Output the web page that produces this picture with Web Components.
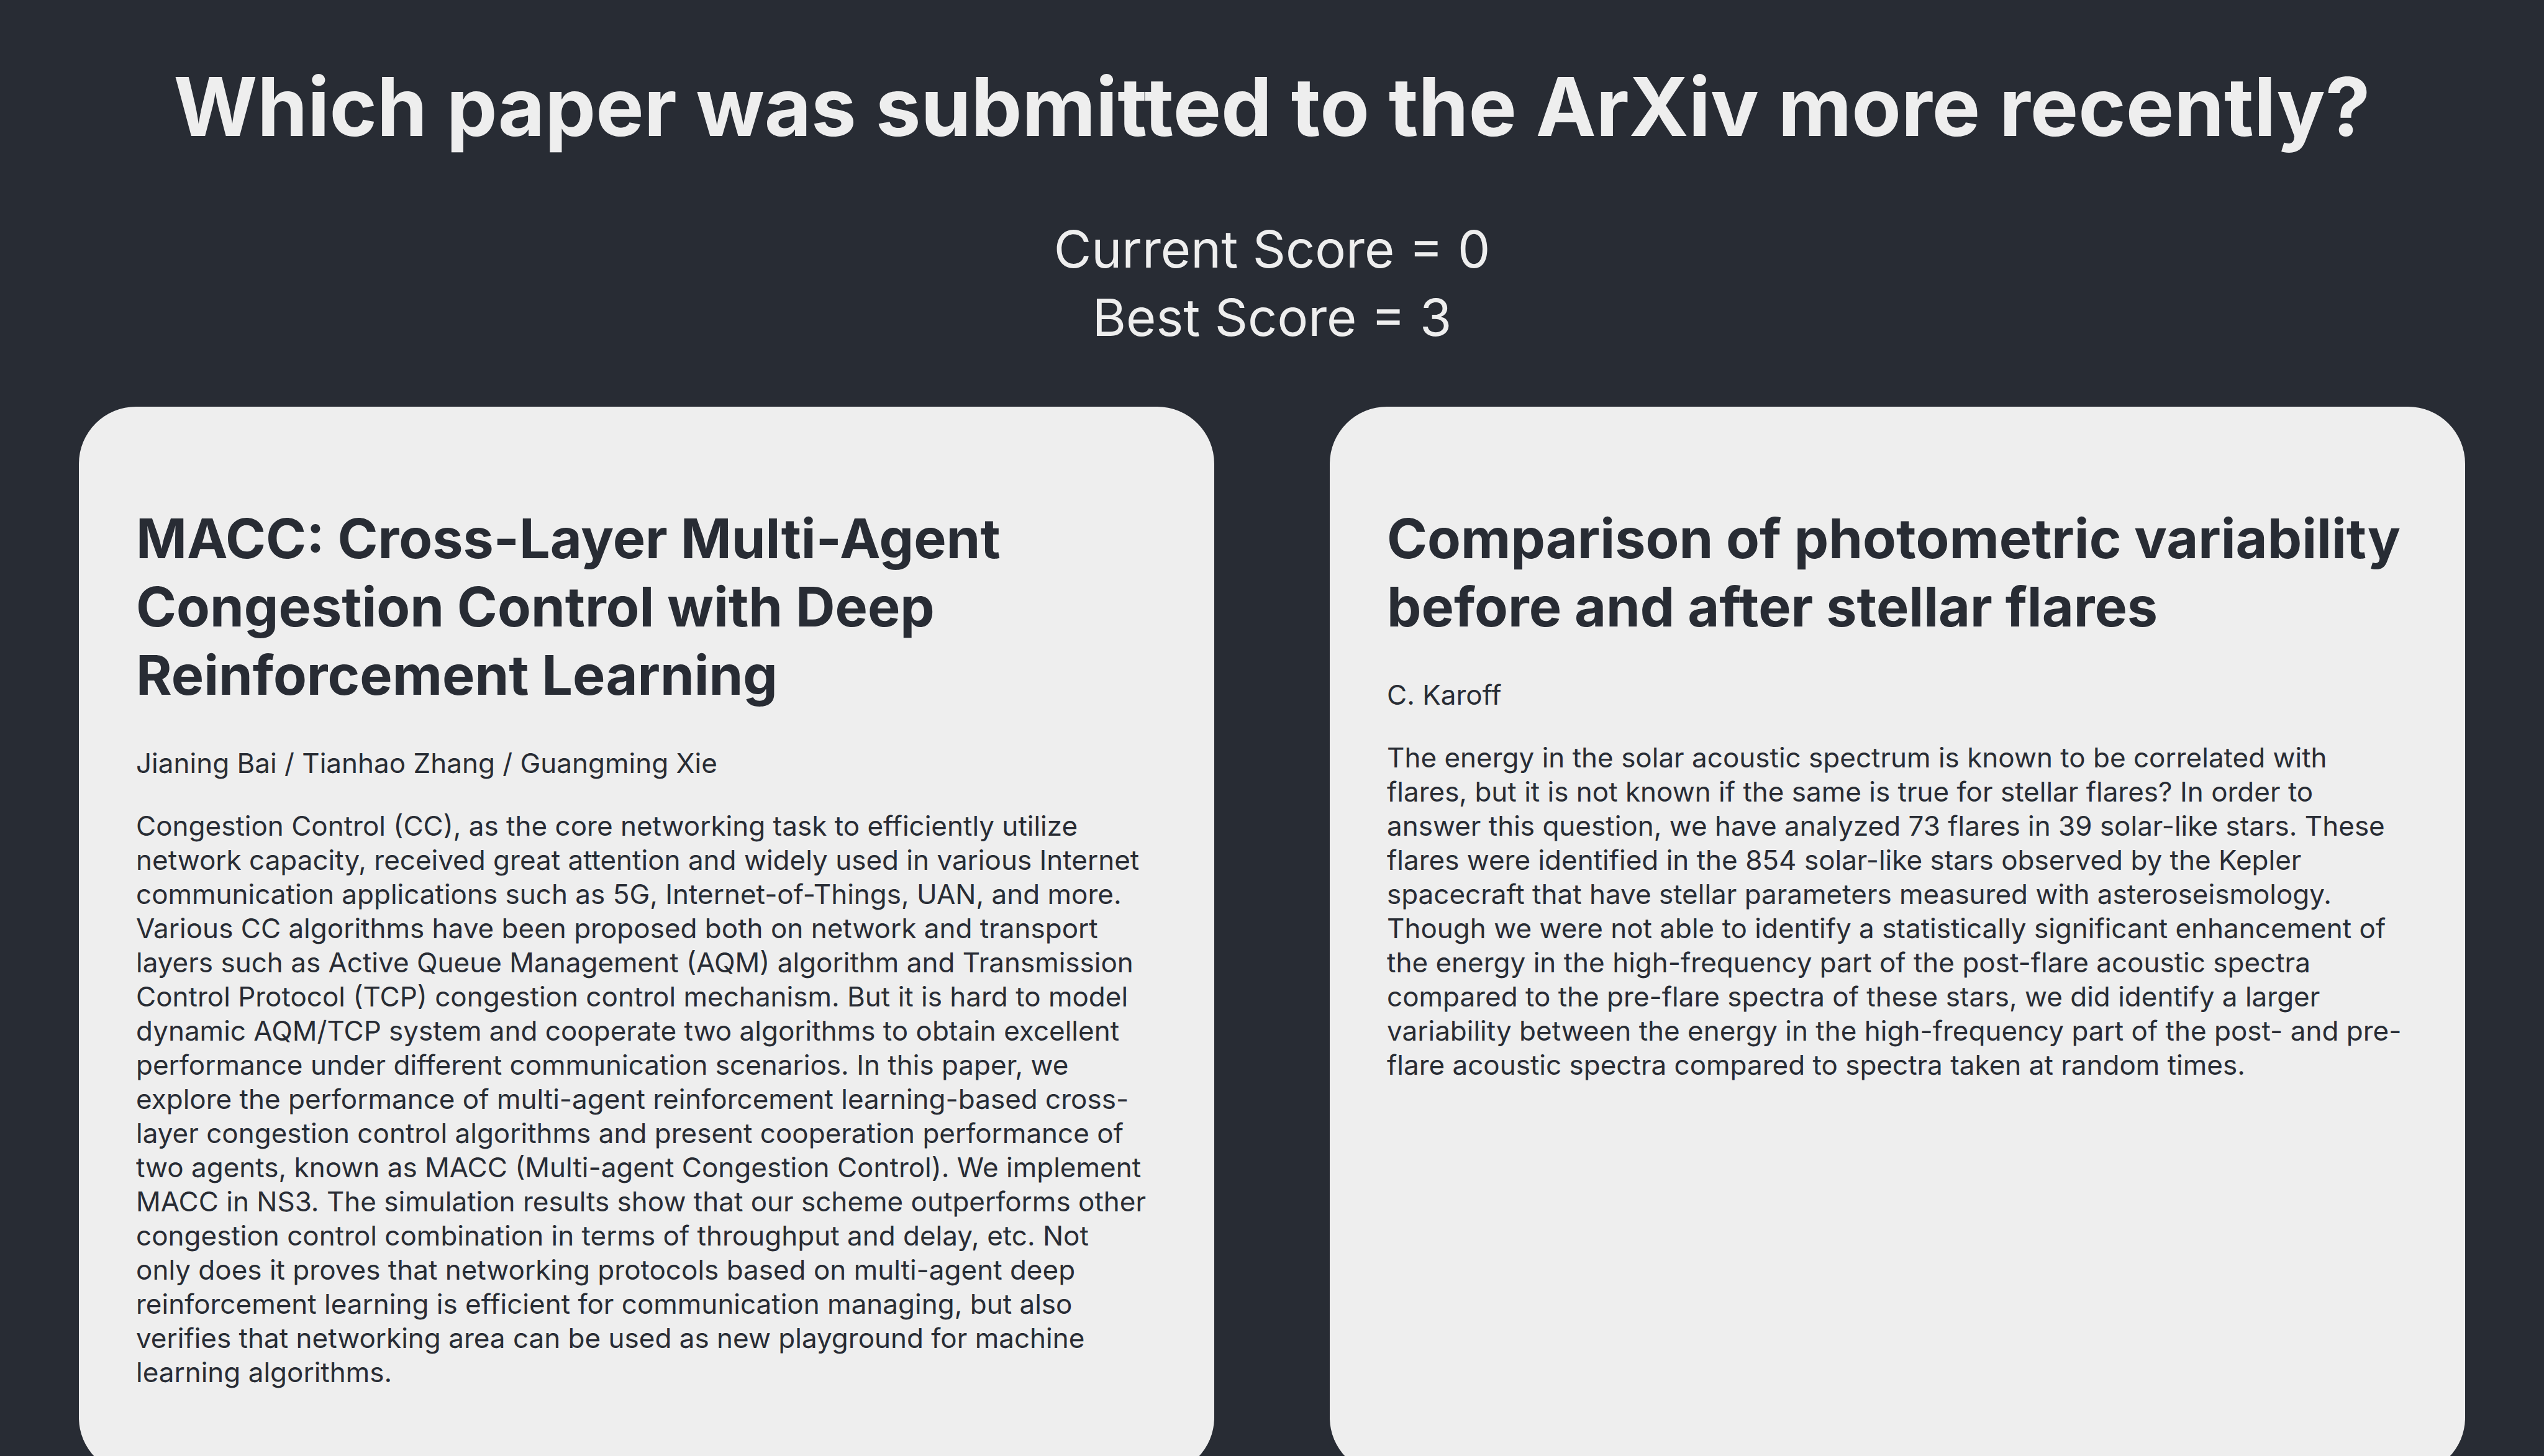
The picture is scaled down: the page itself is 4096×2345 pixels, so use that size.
<!DOCTYPE html>
<html lang="en">
<head>
<meta charset="utf-8">
<title>Which paper was submitted to the ArXiv more recently?</title>
<style>
html { background: #282c34; }
body { margin: 0; }
</style>
</head>
<body>
<arxiv-game>
  <score-board slot="score" current="0" best="3"></score-board>
  <paper-card>
    <span slot="title">MACC: Cross-Layer Multi-Agent<br>Congestion Control with Deep<br>Reinforcement Learning</span>
    <span slot="authors">Jianing Bai / Tianhao Zhang / Guangming Xie</span>
    <span slot="abstract">Congestion Control (CC), as the core networking task to efficiently utilize<br>network capacity, received great attention and widely used in various Internet<br>communication applications such as 5G, Internet-of-Things, UAN, and more.<br>Various CC algorithms have been proposed both on network and transport<br>layers such as Active Queue Management (AQM) algorithm and Transmission<br>Control Protocol (TCP) congestion control mechanism. But it is hard to model<br>dynamic AQM/TCP system and cooperate two algorithms to obtain excellent<br>performance under different communication scenarios. In this paper, we<br>explore the performance of multi-agent reinforcement learning-based cross-<br>layer congestion control algorithms and present cooperation performance of<br>two agents, known as MACC (Multi-agent Congestion Control). We implement<br>MACC in NS3. The simulation results show that our scheme outperforms other<br>congestion control combination in terms of throughput and delay, etc. Not<br>only does it proves that networking protocols based on multi-agent deep<br>reinforcement learning is efficient for communication managing, but also<br>verifies that networking area can be used as new playground for machine<br>learning algorithms.</span>
  </paper-card>
  <paper-card>
    <span slot="title">Comparison of photometric variability<br>before and after stellar flares</span>
    <span slot="authors">C. Karoff</span>
    <span slot="abstract">The energy in the solar acoustic spectrum is known to be correlated with<br>flares, but it is not known if the same is true for stellar flares? In order to<br>answer this question, we have analyzed 73 flares in 39 solar-like stars. These<br>flares were identified in the 854 solar-like stars observed by the Kepler<br>spacecraft that have stellar parameters measured with asteroseismology.<br>Though we were not able to identify a statistically significant enhancement of<br>the energy in the high-frequency part of the post-flare acoustic spectra<br>compared to the pre-flare spectra of these stars, we did identify a larger<br>variability between the energy in the high-frequency part of the post- and pre-<br>flare acoustic spectra compared to spectra taken at random times.</span>
  </paper-card>
</arxiv-game>

<script>
class ArxivGame extends HTMLElement {
  constructor() {
    super();
    this.attachShadow({ mode: 'open' }).innerHTML = `
      <style>
        :host {
          display: flex;
          flex-direction: column;
          gap: 89px;
          padding: 87px 127px;
          background: #282c34;
          color: #eee;
          font-family: Inter, "Liberation Sans", sans-serif;
        }
        h1 {
          margin: 0;
          font-size: 130px;
          line-height: 170px;
          font-weight: 700;
          text-align: center;
        }
        main {
          display: grid;
          grid-template-columns: repeat(2, minmax(0, 1fr));
          gap: 186px;
        }
      </style>
      <h1>Which paper was submitted to the ArXiv more recently?</h1>
      <slot name="score"></slot>
      <main><slot></slot></main>`;
  }
}

class ScoreBoard extends HTMLElement {
  constructor() {
    super();
    this.attachShadow({ mode: 'open' }).innerHTML = `
      <style>
        :host {
          display: block;
          text-align: center;
          font-size: 83px;
          line-height: 110px;
        }
      </style>
      <div id="current"></div>
      <div id="best"></div>`;
  }
  connectedCallback() {
    this.shadowRoot.getElementById('current').textContent = `Current Score = ${this.getAttribute('current')}`;
    this.shadowRoot.getElementById('best').textContent = `Best Score = ${this.getAttribute('best')}`;
  }
}

class PaperCard extends HTMLElement {
  constructor() {
    super();
    this.attachShadow({ mode: 'open' }).innerHTML = `
      <style>
        :host { display: grid; }
        article {
          padding: 157px 92px 137px;
          border-radius: 92px;
          background: #eee;
          color: #282c34;
        }
        h2 {
          margin: 0 0 60px;
          font-size: 88px;
          line-height: 110px;
          font-weight: 700;
        }
        p {
          margin: 0;
          font-size: 44px;
          line-height: 55px;
        }
        p + p { margin-top: 46px; }
      </style>
      <article>
        <h2><slot name="title"></slot></h2>
        <p><slot name="authors"></slot></p>
        <p><slot name="abstract"></slot></p>
      </article>`;
  }
}

customElements.define('arxiv-game', ArxivGame);
customElements.define('score-board', ScoreBoard);
customElements.define('paper-card', PaperCard);
</script>
</body>
</html>
